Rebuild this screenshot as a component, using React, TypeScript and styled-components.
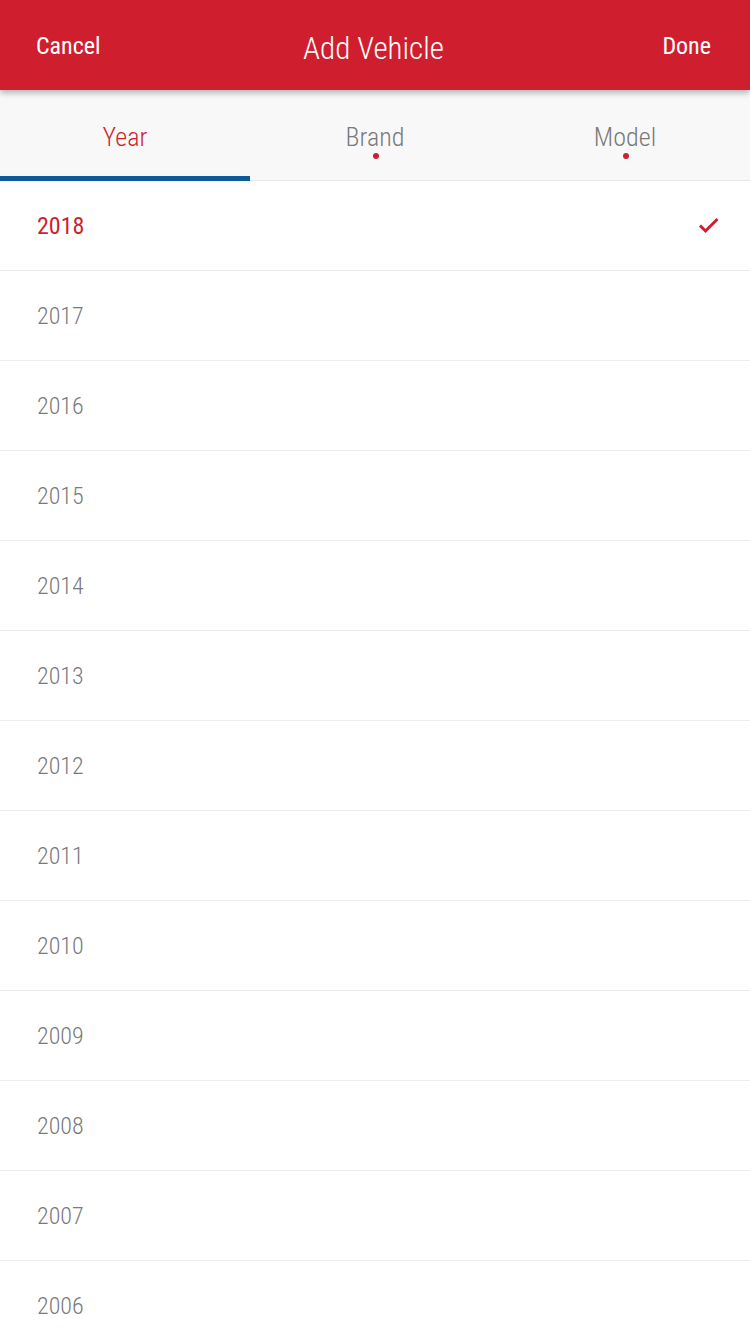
import React from "react";
import styled, { createGlobalStyle } from "styled-components";

const RED = "#cf1f2e";

const Global = createGlobalStyle`
  html, body { margin: 0; padding: 0; background: #fff; }
  body { font-family: "Roboto Condensed", Roboto, "Liberation Sans", sans-serif; }
  * { box-sizing: border-box; }
`;

const Page = styled.div`
  width: 750px;
  min-height: 1334px;
  background: #fff;
  overflow: hidden;
`;

const Header = styled.header`
  position: relative;
  z-index: 2;
  height: 90px;
  background: ${RED};
  display: grid;
  grid-template-columns: 1fr auto 1fr;
  align-items: center;
  padding: 0 39px 0 36px;
  box-shadow: 0 3px 6px rgba(0, 0, 0, 0.28);
  color: #fff;
`;

const Label = styled.span<{ $size: number; $weight?: number }>`
  display: inline-block;
  font-size: ${(p) => p.$size}px;
  font-weight: ${(p) => p.$weight ?? "inherit"};
  white-space: nowrap;
`;

const HeaderButton = styled.div<{ $align: "left" | "right" }>`
  justify-self: ${(p) => (p.$align === "left" ? "start" : "end")};
  display: flex;
  padding-top: 2px;
`;

const Title = styled.div`
  justify-self: center;
  padding-top: 6px;
`;

const Tabs = styled.nav`
  height: 91px;
  background: #f8f8f8;
  display: grid;
  grid-template-columns: repeat(3, 1fr);
  border-bottom: 1px solid #e6e6e6;
`;

const Tab = styled.div<{ $active?: boolean }>`
  position: relative;
  display: flex;
  flex-direction: column;
  align-items: center;
  justify-content: center;
  color: ${(p) => (p.$active ? RED : "#7a7a7a")};
  font-weight: 300;
  padding-top: 8px;
  border-bottom: 5px solid ${(p) => (p.$active ? "#0f5a98" : "transparent")};
  margin-bottom: -1px;
`;

const Dot = styled.span`
  position: absolute;
  left: 50%;
  top: 63px;
  width: 6px;
  height: 6px;
  margin-left: -2px;
  border-radius: 50%;
  background: ${RED};
`;

const List = styled.ul`
  list-style: none;
  margin: 0;
  padding: 0;
`;

const Row = styled.li<{ $selected?: boolean }>`
  height: 90px;
  border-bottom: 1px solid #ececec;
  display: flex;
  align-items: center;
  justify-content: space-between;
  padding: 0 30px 0 37px;
  color: ${(p) => (p.$selected ? RED : "#7a7a7a")};
  font-weight: ${(p) => (p.$selected ? 400 : 300)};
`;

const years = Array.from({ length: 13 }, (_, i) => 2018 - i);

function Check() {
  return (
    <svg width="22" height="18" viewBox="0 0 22 18">
      <path d="M2 8.5 L7.5 14 L19.5 2" fill="none" stroke={RED} strokeWidth="3" />
    </svg>
  );
}

export default function App() {
  return (
    <Page>
      <Global />
      <Header>
        <HeaderButton $align="left">
          <Label $size={24}>Cancel</Label>
        </HeaderButton>
        <Title>
          <Label $size={31} $weight={300}>Add Vehicle</Label>
        </Title>
        <HeaderButton $align="right">
          <Label $size={24}>Done</Label>
        </HeaderButton>
      </Header>
      <Tabs>
        <Tab $active>
          <Label $size={26}>Year</Label>
        </Tab>
        <Tab>
          <Label $size={26}>Brand</Label>
          <Dot />
        </Tab>
        <Tab>
          <Label $size={26}>Model</Label>
          <Dot />
        </Tab>
      </Tabs>
      <List>
        {years.map((y, i) => (
          <Row key={y} $selected={i === 0}>
            <Label $size={24}>{y}</Label>
            {i === 0 && <Check />}
          </Row>
        ))}
      </List>
    </Page>
  );
}
